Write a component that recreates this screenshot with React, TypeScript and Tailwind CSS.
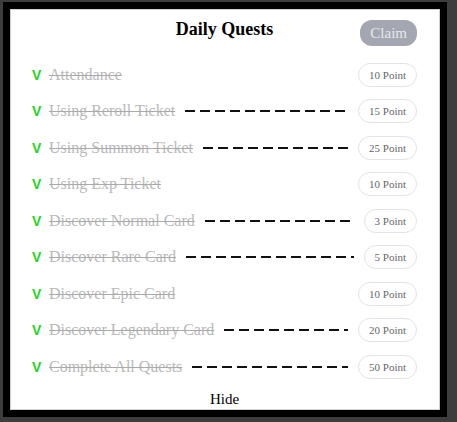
import React from "react";

type Quest = { name: string; points: number; dashed: boolean };

const quests: Quest[] = [
  { name: "Attendance", points: 10, dashed: false },
  { name: "Using Reroll Ticket", points: 15, dashed: true },
  { name: "Using Summon Ticket", points: 25, dashed: true },
  { name: "Using Exp Ticket", points: 10, dashed: false },
  { name: "Discover Normal Card", points: 3, dashed: true },
  { name: "Discover Rare Card", points: 5, dashed: true },
  { name: "Discover Epic Card", points: 10, dashed: false },
  { name: "Discover Legendary Card", points: 20, dashed: true },
  { name: "Complete All Quests", points: 50, dashed: true },
];

const serif = "font-['Liberation_Serif',serif]";

function QuestRow({ q }: { q: Quest }) {
  return (
    <li className="flex h-[36.5px] items-center">
      <span className="w-[17px] font-['Liberation_Sans',sans-serif] text-[14px] font-bold leading-none text-[#1ed41e]">V</span>
      <span className={`${serif} text-[16px] leading-none text-[#b9b9b9] line-through decoration-[#aaaaaa]`}>{q.name}</span>
      <div className="mx-[10px] flex-1">
        {q.dashed && (
          <div className="h-[2px] bg-[repeating-linear-gradient(90deg,#111_0_10px,transparent_10px_15px)]" />
        )}
      </div>
      <span
        className={`${serif} flex h-[24px] items-center rounded-full border border-[#e2e2ea] px-[10px] text-[11px] text-[#666]`}
      >
        {q.points} Point
      </span>
    </li>
  );
}

export default function App() {
  return (
    <div className="h-[422px] w-[457px] bg-[#3d3d3d] pb-[5px] pl-[3px] pr-[10px] pt-[2px]">
      <div className="h-full w-full border-[7px] border-black bg-[#cfcfcf] p-px">
        <div className="flex h-full flex-col bg-white pl-[21px] pr-[22px]">
          <header className="grid h-[47px] grid-cols-[1fr_auto_1fr] items-start">
            <div />
            <h1 className={`${serif} mt-[8px] text-[18px] font-bold leading-[22px] text-black`}>Daily Quests</h1>
            <button
              className={`${serif} mt-[10px] h-[26px] justify-self-end rounded-[12px] bg-[#a4a7b1] px-[10px] text-[15px] leading-none text-[#e8e8ec]`}
            >
              Claim
            </button>
          </header>
          <ul className="flex flex-col">
            {quests.map((q) => (
              <QuestRow key={q.name} q={q} />
            ))}
          </ul>
          <button className={`${serif} mx-auto mt-[4px] text-[15px] leading-[20px] text-black`}>Hide</button>
        </div>
      </div>
    </div>
  );
}
